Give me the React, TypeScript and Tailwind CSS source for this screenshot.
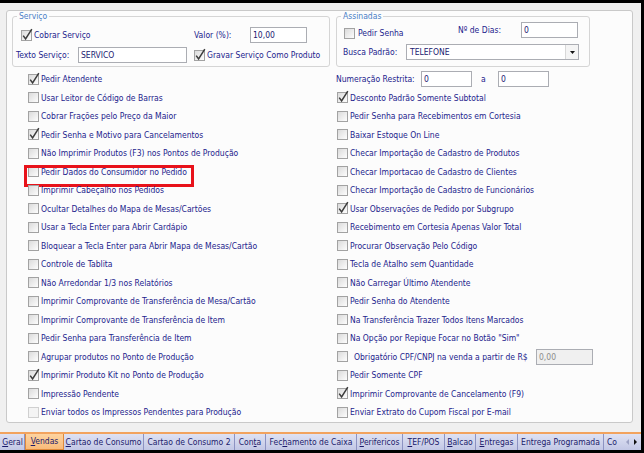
import { FC, ReactNode } from "react";

const Box: FC<{ checked?: boolean; disabled?: boolean }> = ({ checked, disabled }) => (
  <svg width="13" height="13" viewBox="0 0 13 13" className="shrink-0 overflow-visible">
    <defs>
      <linearGradient id="cbg" x1="0" y1="0" x2="1" y2="1">
        <stop offset="0" stopColor="#d9d9d9" />
        <stop offset="1" stopColor="#ffffff" />
      </linearGradient>
    </defs>
    <rect
      x="0.5"
      y="1.5"
      width="10"
      height="10"
      fill={disabled ? "#f4f4f4" : "url(#cbg)"}
      stroke={disabled ? "#d0d0d0" : "#a2a2a2"}
    />
    {checked && (
      <path d="M2.2 6.6 L4.6 10 L10.8 0.2" fill="none" stroke="#3c3c3c" strokeWidth="1.5" />
    )}
  </svg>
);

const CheckRow: FC<{ label: ReactNode; checked?: boolean; disabled?: boolean }> = ({
  label,
  checked,
  disabled,
}) => (
  <div className="flex h-[18.5px] items-center whitespace-nowrap">
    <Box checked={checked} disabled={disabled} />
    <span>{label}</span>
  </div>
);

const Field: FC<{ value?: string; className?: string; disabled?: boolean }> = ({
  value,
  className,
  disabled,
}) => (
  <div
    className={`flex h-[16px] shrink-0 items-center border border-[#abadb3] px-[2px] ${
      disabled ? "bg-[#f0f0f0] text-[#8c8c8c]" : "bg-white text-[#1a1a70]"
    } ${className ?? ""}`}
  >
    {value}
  </div>
);

const leftRows: { label: string; checked?: boolean; disabled?: boolean }[] = [
  { label: "Pedir Atendente", checked: true },
  { label: "Usar Leitor de Código de Barras" },
  { label: "Cobrar Frações pelo Preço da Maior" },
  { label: "Pedir Senha e Motivo para Cancelamentos", checked: true },
  { label: "Não Imprimir Produtos (F3) nos Pontos de Produção" },
  { label: "Pedir Dados do Consumidor no Pedido" },
  { label: "Imprimir Cabeçalho nos Pedidos" },
  { label: "Ocultar Detalhes do Mapa de Mesas/Cartões" },
  { label: "Usar a Tecla Enter para Abrir Cardápio" },
  { label: "Bloquear a Tecla Enter para Abrir Mapa de Mesas/Cartão" },
  { label: "Controle de Tablita" },
  { label: "Não Arredondar 1/3 nos Relatórios" },
  { label: "Imprimir Comprovante de Transferência de Mesa/Cartão" },
  { label: "Imprimir Comprovante de Transferência de Item" },
  { label: "Pedir Senha para Transferência de Item" },
  { label: "Agrupar produtos no Ponto de Produção" },
  { label: "Imprimir Produto Kit no Ponto de Produção", checked: true },
  { label: "Impressão Pendente" },
  { label: "Enviar todos os Impressos Pendentes para Produção", disabled: true },
];

const rightRows: { label: string; checked?: boolean }[] = [
  { label: "Desconto Padrão Somente Subtotal", checked: true },
  { label: "Pedir Senha para Recebimentos em Cortesia" },
  { label: "Baixar Estoque On Line" },
  { label: "Checar Importação de Cadastro de Produtos" },
  { label: "Checar Importacao de Cadastro de Clientes" },
  { label: "Checar Importação de Cadastro de Funcionários" },
  { label: "Usar Observações de Pedido por Subgrupo", checked: true },
  { label: "Recebimento em Cortesia Apenas Valor Total" },
  { label: "Procurar Observação Pelo Código" },
  { label: "Tecla de Atalho sem Quantidade" },
  { label: "Não Carregar Último Atendente" },
  { label: "Pedir Senha do Atendente" },
  { label: "Na Transferência Trazer Todos Itens Marcados" },
  { label: 'Na Opção por Repique Focar no Botão "Sim"' },
  { label: "OBRIGATORIO" },
  { label: "Pedir Somente CPF" },
  { label: "Imprimir Comprovante de Cancelamento (F9)", checked: true },
  { label: "Enviar Extrato do Cupom Fiscal por E-mail" },
];

const tabs: { text: string; u: number; w: string; active?: boolean }[] = [
  { text: "Geral", u: 0, w: "w-[24px]" },
  { text: "Vendas", u: 0, w: "w-[39px]", active: true },
  { text: "Cartao de Consumo", u: 0, w: "w-[80px]" },
  { text: "Cartao de Consumo 2", u: -1, w: "w-[91px]" },
  { text: "Conta", u: 3, w: "w-[31px]" },
  { text: "Fechamento de Caixa", u: 3, w: "w-[91px]" },
  { text: "Perifericos", u: 0, w: "w-[46px]" },
  { text: "TEF/POS", u: 0, w: "w-[42px]" },
  { text: "Balcao", u: 0, w: "w-[31px]" },
  { text: "Entregas", u: 0, w: "w-[42px]" },
  { text: "Entrega Programada", u: -1, w: "w-[86px]" },
];

const Mnemonic: FC<{ text: string; u: number }> = ({ text, u }) =>
  u < 0 ? (
    <>{text}</>
  ) : (
    <>
      {text.slice(0, u)}
      <u>{text[u]}</u>
      {text.slice(u + 1)}
    </>
  );

export default function App() {
  return (
    <div className="h-[453px] w-[644px] overflow-hidden bg-black pt-[3px] pr-[3px] pb-[3px] font-['DejaVu_Sans_Condensed','DejaVu_Sans',sans-serif] text-[8.5px] leading-none font-stretch-condensed text-[#23238c]">
      <div className="flex h-full flex-col bg-[#f0f0f0]">
        <div className="pt-[7px] pl-[6px]">
          <div className="h-[413px] w-[627px] rounded-[3px] border border-[#c9c9c9] bg-[#fcfcfc]">
            {/* group boxes */}
            <div className="flex gap-[6px] pl-[5px]">
              <fieldset className="w-[318px] rounded-[3px] border border-[#d5d5d5] pb-[3px]">
                <legend className="ml-[4px] px-[2px] leading-[10px] text-[#4a7fc7]">Serviço</legend>
                <div className="mt-[6px] flex h-[16px] items-center pl-[8px]">
                  <div className="flex w-[173px] items-center">
                    <Box checked />
                    <span>Cobrar Serviço</span>
                  </div>
                  <span className="w-[56px]">Valor (%):</span>
                  <Field value="10,00" className="w-[57px]" />
                </div>
                <div className="mt-[4px] flex h-[16px] items-center pl-[3px]">
                  <span className="w-[62px]">Texto Serviço:</span>
                  <Field value="SERVICO" className="w-[109px]" />
                  <div className="ml-[7px] flex items-center">
                    <Box checked />
                    <span>Gravar Serviço Como Produto</span>
                  </div>
                </div>
              </fieldset>
              <fieldset className="w-[254px] rounded-[3px] border border-[#d5d5d5] pb-[6px]">
                <legend className="ml-[4px] px-[2px] leading-[10px] text-[#4a7fc7]">Assinadas</legend>
                <div className="mt-[1px] flex h-[16px] items-center pl-[7px]">
                  <div className="mt-[6px] flex w-[114px] items-center">
                    <Box />
                    <span className="ml-[1px]">Pedir Senha</span>
                  </div>
                  <span className="w-[63px]">Nº de Dias:</span>
                  <Field value="0" className="w-[57px]" />
                </div>
                <div className="mt-[6px] flex h-[16px] items-center pl-[6px]">
                  <span className="w-[63px]">Busca Padrão:</span>
                  <div className="flex h-[16px] w-[173px] items-stretch border border-[#abadb3] bg-white">
                    <span className="flex flex-1 items-center px-[3px] text-[#1a1a70]">TELEFONE</span>
                    <span className="flex w-[13px] items-center justify-center border-l border-[#d8d8d8] bg-[#f4f4f4]">
                      <svg width="5" height="3" viewBox="0 0 5 3">
                        <path d="M0 0 H5 L2.5 3 Z" fill="#111" />
                      </svg>
                    </span>
                  </div>
                </div>
              </fieldset>
            </div>

            {/* options */}
            <div className="mt-[3px] grid grid-cols-[309px_1fr] pl-[21px]">
              <div className="flex flex-col">
                {leftRows.map((r, i) => (
                  <div key={r.label} className="relative">
                    <CheckRow label={r.label} checked={r.checked} disabled={r.disabled} />
                    {i === 5 && (
                      <div className="absolute top-[2px] -left-[4px] h-[22px] w-[170px] border-[3px] border-[#e8121a]" />
                    )}
                  </div>
                ))}
              </div>
              <div className="flex flex-col">
                <div className="-ml-[1px] flex h-[18.5px] items-center whitespace-nowrap">
                  <span className="w-[85px]">Numeração Restrita:</span>
                  <Field value="0" className="h-[15px] w-[51px]" />
                  <span className="w-[26px] pl-[9px]">a</span>
                  <Field value="0" className="h-[15px] w-[51px]" />
                </div>
                {rightRows.map((r) =>
                  r.label === "OBRIGATORIO" ? (
                    <div key={r.label} className="flex h-[18.5px] items-center whitespace-nowrap">
                      <Box />
                      <span className="w-[186px] pl-[4px]">Obrigatório CPF/CNPJ na venda a partir de R$</span>
                      <Field value="0,00" disabled className="w-[57px]" />
                    </div>
                  ) : (
                    <CheckRow key={r.label} label={r.label} checked={r.checked} />
                  )
                )}
              </div>
            </div>
          </div>
        </div>

        {/* tab strip */}
        <div className="mt-[9px] flex h-[18px] border-t-2 border-[#f2a35e] bg-linear-to-b from-[#dfe2f3] to-[#c2c7e5] pl-[1px] text-[#1b1b6b]">
          {tabs.map((t) => (
            <div
              key={t.text}
              className={`flex h-full shrink-0 items-center justify-center overflow-hidden whitespace-nowrap ${t.w} ${
                t.active
                  ? "border-x border-b border-[#e08a3a] bg-linear-to-b from-[#fdd3a0] to-[#f9bb7a]"
                  : "border-r border-[#8d93c2]"
              }`}
            >
              <span>
                <Mnemonic text={t.text} u={t.u} />
              </span>
            </div>
          ))}
          <div className="flex h-full w-[17px] shrink-0 items-center whitespace-nowrap pl-[3px]">Co</div>
          <div className="flex h-full flex-1 items-center justify-center gap-[5px]">
            <svg width="3" height="6" viewBox="0 0 3 6">
              <path d="M3 0 V6 L0 3 Z" fill="#9da2c4" />
            </svg>
            <svg width="3" height="6" viewBox="0 0 3 6">
              <path d="M0 0 V6 L3 3 Z" fill="#111" />
            </svg>
          </div>
        </div>
      </div>
    </div>
  );
}
